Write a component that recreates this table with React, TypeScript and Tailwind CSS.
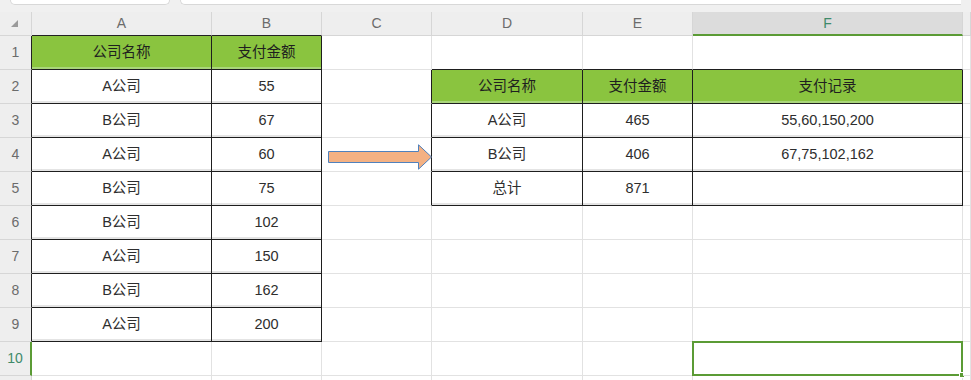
import React from "react";

type Kind = "green" | "table" | "empty";

const COLS = ["A", "B", "C", "D", "E", "F", ""];

const leftRows: [string, string][] = [
  ["公司名称", "支付金额"],
  ["A公司", "55"],
  ["B公司", "67"],
  ["A公司", "60"],
  ["B公司", "75"],
  ["B公司", "102"],
  ["A公司", "150"],
  ["B公司", "162"],
  ["A公司", "200"],
];

const rightRows: string[][] = [
  ["公司名称", "支付金额", "支付记录"],
  ["A公司", "465", "55,60,150,200"],
  ["B公司", "406", "67,75,102,162"],
  ["总计", "871", ""],
];

// r: 1..10 sheet rows, c: 0..6 column index
function inTable(r: number, c: number) {
  if (c >= 0 && c <= 1 && r >= 1 && r <= 9) return true;
  if (c >= 3 && c <= 5 && r >= 2 && r <= 5) return true;
  return false;
}

function getCell(r: number, c: number): { text: string; kind: Kind } {
  if (c <= 1 && r >= 1 && r <= 9) {
    return { text: leftRows[r - 1][c], kind: r === 1 ? "green" : "table" };
  }
  if (c >= 3 && c <= 5 && r >= 2 && r <= 5) {
    return { text: rightRows[r - 2][c - 3], kind: r === 2 ? "green" : "table" };
  }
  return { text: "", kind: "empty" };
}

function Arrow() {
  return (
    <svg
      className="absolute left-[6px] top-[6px]"
      width="105"
      height="26"
      viewBox="0 0 105 26"
    >
      <path
        d="M0.5 7.5 H90.5 V0.8 L103.5 13 L90.5 25.2 V18.5 H0.5 Z"
        fill="#f4b183"
        stroke="#4f81bd"
        strokeWidth="1"
      />
    </svg>
  );
}

function ColHeader({ c }: { c: number }) {
  const below = inTable(1, c);
  const selected = c === 5;
  return (
    <div
      className={[
        "flex items-center justify-center text-[14px] border-r border-r-[#d6d6d6]",
        selected
          ? "bg-[#dcdcdc] text-[#3f8a6a] border-b-2 border-b-[#5b9b35]"
          : "bg-[#eeeeee] text-[#6b6b6b] border-b",
        !selected && below ? "border-b-[#222]" : "",
        !selected && !below ? "border-b-[#d6d6d6]" : "",
      ].join(" ")}
    >
      {COLS[c]}
    </div>
  );
}

function RowHeader({ r }: { r: number }) {
  const rightBlack = inTable(r, 0);
  const selected = r === 10;
  return (
    <div
      className={[
        "flex items-center justify-center text-[14px] bg-[#eeeeee] border-b border-b-[#d6d6d6]",
        selected
          ? "text-[#3f8a6a] border-r-2 border-r-[#5b9b35]"
          : "text-[#6b6b6b] border-r",
        !selected && rightBlack ? "border-r-[#222]" : "",
        !selected && !rightBlack ? "border-r-[#d6d6d6]" : "",
      ].join(" ")}
    >
      {r}
    </div>
  );
}

function Cell({ r, c }: { r: number; c: number }) {
  const { text, kind } = getCell(r, c);
  const rightBlack = inTable(r, c) || inTable(r, c + 1);
  const bottomBlack = inTable(r, c) || inTable(r + 1, c);
  return (
    <div
      className={[
        "relative flex items-center justify-center border-r border-b text-[14.5px]",
        rightBlack ? "border-r-[#1e1e1e]" : "border-r-[#e2e2e2]",
        bottomBlack ? "border-b-[#1e1e1e]" : "border-b-[#e2e2e2]",
        kind === "green" ? "bg-[#8ac43f] text-[#1f1f1f]" : "bg-white text-[#2e2e2e]",
        kind === "table" ? "shadow-[inset_0_-2px_0_#e4e4e4]" : "",
        kind === "green" ? "shadow-[inset_0_-2px_0_#a9d57a]" : "",
      ].join(" ")}
    >
      {text}
      {r === 4 && c === 2 && <Arrow />}
      {r === 10 && c === 5 && (
        <div className="absolute -left-px -top-px -right-px -bottom-px border-2 border-[#5b9b35]">
          <div className="absolute -right-[4px] -bottom-[4px] w-[6px] h-[6px] bg-[#5b9b35] border border-white" />
        </div>
      )}
    </div>
  );
}

export default function App() {
  const rows = Array.from({ length: 10 }, (_, i) => i + 1);
  return (
    <div className="w-[971px] h-[380px] overflow-hidden bg-white font-['Liberation_Sans','Noto_Sans_CJK_SC',sans-serif]">
      {/* formula bar strip */}
      <div className="h-[12px] bg-[#f0f0f0] flex gap-[10px] px-[10px]">
        <div className="w-[160px] h-[5px] bg-white border border-t-0 border-[#d8d8d8] rounded-b-[5px]" />
        <div className="flex-1 h-[5px] bg-white border border-t-0 border-r-0 border-[#d8d8d8] rounded-bl-[5px]" />
      </div>

      <div className="grid grid-cols-[32px_180px_110px_110px_151px_110px_270px_8px] grid-rows-[24px_repeat(10,34px)_4px]">
        {/* corner */}
        <div className="bg-[#eeeeee] border-r border-b border-[#d6d6d6] flex items-center pl-[11px]">
          <svg width="7" height="7" viewBox="0 0 7 7">
            <path d="M7 0 L7 7 L0 7 Z" fill="#9a9a9a" />
          </svg>
        </div>
        {COLS.map((_, c) => (
          <ColHeader key={c} c={c} />
        ))}

        {rows.map((r) => (
          <React.Fragment key={r}>
            <RowHeader r={r} />
            {COLS.map((_, c) => (
              <Cell key={c} r={r} c={c} />
            ))}
          </React.Fragment>
        ))}

        {/* partial row 11 */}
        <div className="bg-[#eeeeee] border-r border-[#d6d6d6]" />
        {COLS.map((_, c) => (
          <div key={c} className="bg-white border-r border-[#e2e2e2]" />
        ))}
      </div>
    </div>
  );
}
